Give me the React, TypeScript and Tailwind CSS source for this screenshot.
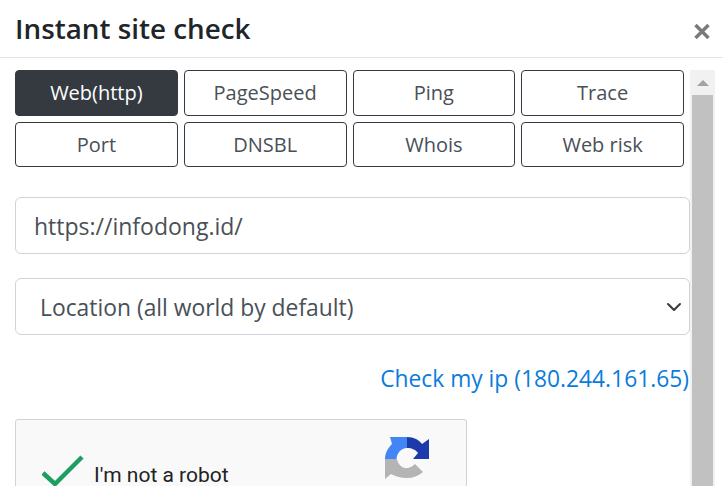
const tabs = ['Web(http)', 'PageSpeed', 'Ping', 'Trace', 'Port', 'DNSBL', 'Whois', 'Web risk'];

function RecaptchaLogo() {
  return (
    <svg width="45" height="46" viewBox="0 0 45 46" className="mt-[17px] mr-[36px] shrink-0">
      {/* dark blue arrow */}
      <path d="M22 0 C29 0 34 3 37 7 L44 2 L44 22 L28 22 L33 16 C31 13 27 11 22 11 Z" fill="#1c3aa9" />
      {/* light blue arrow */}
      <path d="M22 0 L22 11 C16 11 12 16 11.500 22 L0 22 C0 16 3 11 7 7 L5 0 Z" fill="#4285f4" />
      {/* grey arrow */}
      <path d="M0 22 L12 22 C13 28 18 32 23 31 C26 30 28 29 30 27 L38 35 C33 39 28 41 22 41 C15 41 10 39 6 37 L0 42 Z" fill="#b4b4b4" />
    </svg>
  );
}

export default function App() {
  return (
    <div className="h-[486px] w-[723px] overflow-hidden bg-white font-['Open_Sans','Noto_Sans',sans-serif] text-[#212529]">
      {/* Header */}
      <div className="flex h-[58px] items-start justify-between border-b border-[#e3e3e3] pl-[15px] pr-[13px]">
        <h1 className="mt-[8px] text-[27.800px] leading-[40px] font-semibold">Instant site check</h1>
        <svg width="16" height="15" viewBox="0 0 16 15" fill="none" stroke="#7a7a7a" strokeWidth="3.500" className="mt-[24px]">
          <path d="M1.500 1l13 13M14.500 1l-13 13" />
        </svg>
      </div>

      <div className="flex">
        {/* Body */}
        <div className="w-[690px] shrink-0 pl-[15px] pt-[12px]">
          <div className="grid w-[669px] grid-cols-4 gap-x-[6px] gap-y-[6px]">
            {tabs.map((tab, i) => (
              <button
                key={tab}
                className={`flex items-center justify-center rounded border border-[#343a40] text-[20px] ${
                  i < 4 ? 'h-[46px]' : 'h-[45px] pt-[1px]'
                } ${i === 0 ? 'bg-[#343a40] font-medium text-white' : 'bg-white text-[#495057]'}`}
              >
                {tab}
              </button>
            ))}
          </div>

          <div className="mt-[30px] flex h-[57px] items-center rounded-md border border-[#ced4da] pl-[18px] pt-[2px] text-[23px] text-[#495057]">
            https://infodong.id/
          </div>

          <div className="mt-[24px] flex h-[57px] items-center justify-between rounded-md border border-[#ced4da] pl-[24px] pr-[7px] pt-[3px] text-[22.850px] text-[#495057]">
            <span>Location (all world by default)</span>
            <svg width="16" height="16" viewBox="0 0 16 16" fill="none" stroke="#343a40" strokeWidth="2" strokeLinecap="round" strokeLinejoin="round" className="-mt-[3px]">
              <path d="M2 5l6 6 6-6" />
            </svg>
          </div>

          <div className="mt-[27px] pr-[1px] text-right text-[22.800px] leading-[33px] text-[#0a7cdc]">
            Check my ip (180.244.161.65)
          </div>

          {/* reCAPTCHA */}
          <div className="mt-[24px] flex h-[100px] w-[452px] justify-between rounded-[3px] border border-[#d3d3d3] bg-[#f9f9f9]">
            <div className="flex items-start">
              <svg width="44" height="36" viewBox="0 0 44 36" fill="none" stroke="#1e9e63" strokeWidth="4.500" className="ml-[26px] mt-[33px] shrink-0">
                <path d="M1 20l12 11L40 4" />
              </svg>
              <span className="ml-[8px] mt-[41px] font-['Roboto',sans-serif] text-[21px] leading-[28px] text-[#222]">I'm not a robot</span>
            </div>
            <RecaptchaLogo />
          </div>
        </div>

        {/* Scrollbar */}
        <div className="mt-[12px] flex h-[416px] w-[25px] flex-col items-center bg-[#f1f1f1]">
          <div className="flex h-[25px] w-full shrink-0 items-center justify-center">
            <div className="h-0 w-0 border-x-[6px] border-b-[6px] border-x-transparent border-b-[#a3a3a3]" />
          </div>
          <div className="w-[21px] flex-1 bg-[#c1c1c1]" />
        </div>
      </div>
    </div>
  );
}
